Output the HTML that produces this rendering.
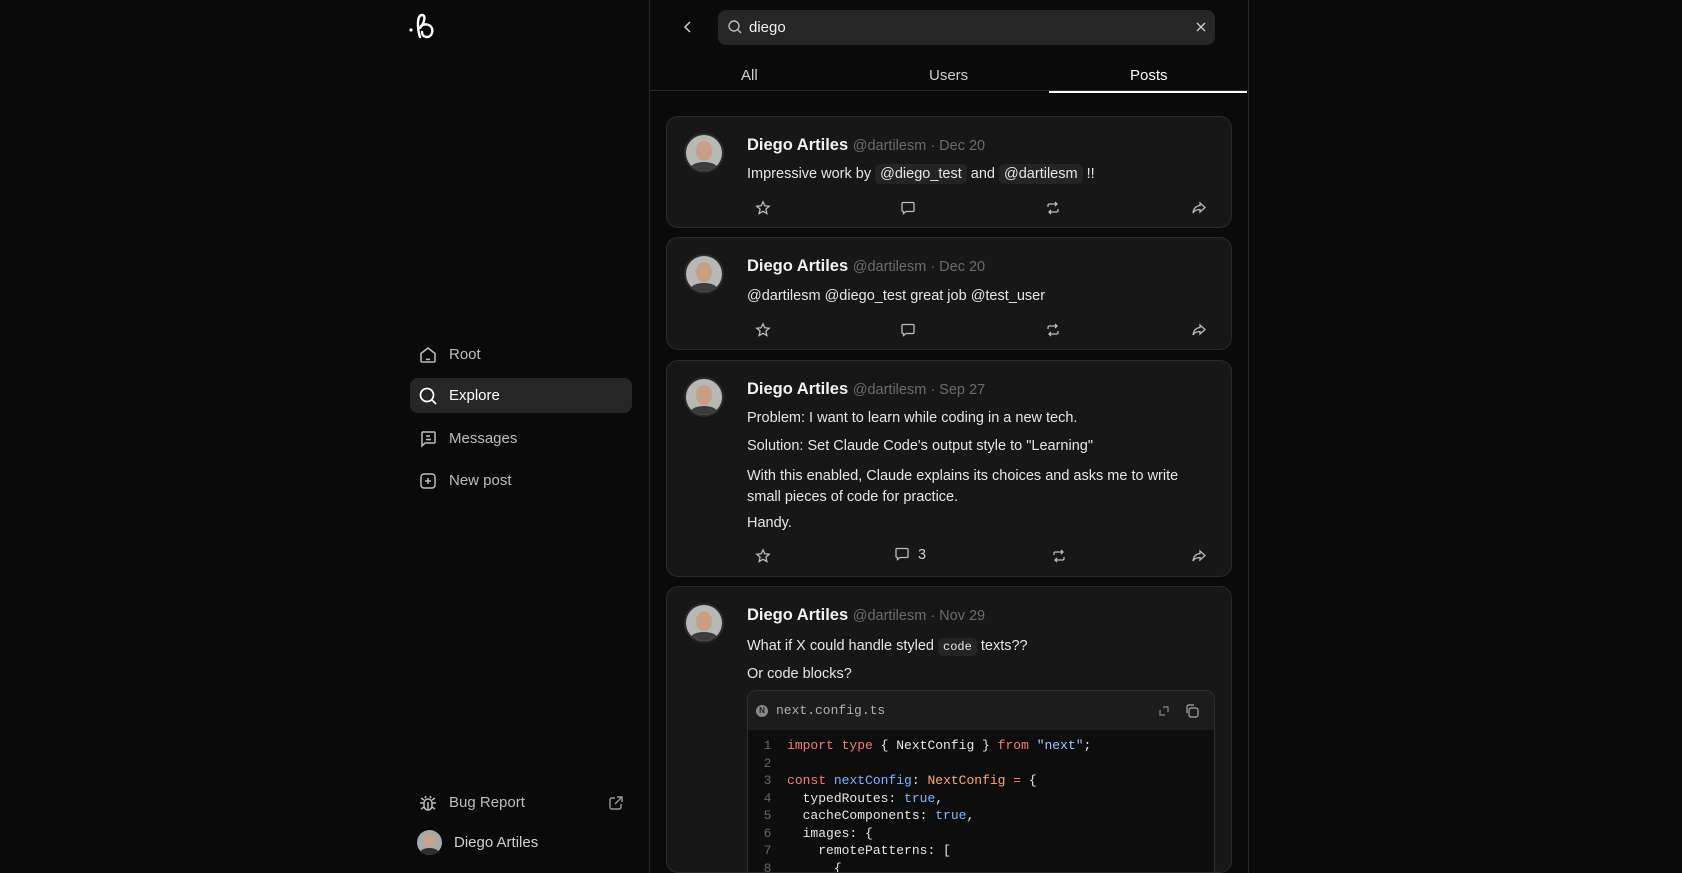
<!DOCTYPE html>
<html style="width:1682px;height:873px;overflow:hidden"><head><meta charset="utf-8"><style>
*{box-sizing:border-box;margin:0;padding:0}
body{width:1682px;height:873px;overflow:hidden;background:#0a0a0a;font-family:"Liberation Sans",sans-serif;color:#ededed;position:relative}
.abs{position:absolute}
.main{position:absolute;left:649px;top:0;width:600px;height:873px;border-left:1px solid #262626;border-right:1px solid #262626}
.nav{position:absolute;left:410px;width:222px;height:35px;border-radius:8px;display:flex;align-items:center;font-size:15px;color:#bdbdbd}
.nav svg{position:absolute;left:8px}
.nav span{position:absolute;left:39px}
.card{position:absolute;left:666px;width:566px;background:#171717;border:1px solid #2a2a2a;border-radius:12px;overflow:hidden}
.av{position:absolute;left:17px;top:16px;width:40px;height:40px;border-radius:50%;background:#b8b8b6;border:2px solid #2b2b2b;overflow:hidden}
.name{position:absolute;left:80px;font-size:16.5px;font-weight:bold;color:#f2f2f2;white-space:nowrap}
.name small{font-size:14.5px;font-weight:normal;color:#6b6b6b}
.txt{position:absolute;left:80px;font-size:14.5px;color:#e6e6e6;white-space:nowrap}
.m{background:#242424;border-radius:5px;padding:2px 5px}
.ic{position:absolute}
.code{font-family:"Liberation Mono",monospace;font-size:13px}
</style></head><body>
<svg class="abs" style="left:408px;top:10px" width="36" height="34" viewBox="0 0 36 34"><circle cx="3" cy="20" r="1.6" fill="#fff"/><path d="M12 27 C9 18 9 5 14 5 C18 5 17 12 12 18 M13 16 C19 12 26 16 24 23 C22 29 14 28 14 22" fill="none" stroke="#fff" stroke-width="2.4" stroke-linecap="round"/></svg>
<div class="nav" style="top:337px"><svg width="20" height="20" viewBox="0 0 20 20" fill="none" stroke="#bdbdbd" stroke-width="1.5"><path d="M3 8.5 L10 3 L17 8.5 V16 Q17 17 16 17 H4 Q3 17 3 16Z"/><path d="M8 14 Q10 15 12 14"/></svg><span>Root</span></div>
<div class="nav" style="top:378px;background:#262626;color:#fff"><svg width="20" height="20" viewBox="0 0 20 20" fill="none" stroke="#fff" stroke-width="1.7"><circle cx="9" cy="9" r="6.5"/><path d="M14 14 L18 18"/></svg><span>Explore</span></div>
<div class="nav" style="top:421px"><svg width="20" height="20" viewBox="0 0 20 20" fill="none" stroke="#bdbdbd" stroke-width="1.5"><path d="M4 3 H16 Q17 3 17 4 V13 Q17 14 16 14 H7 L4 17 V4 Q4 3 5 3"/><path d="M8 7 H12 M8 10.5 H13"/></svg><span>Messages</span></div>
<div class="nav" style="top:463px"><svg width="20" height="20" viewBox="0 0 20 20" fill="none" stroke="#bdbdbd" stroke-width="1.5"><rect x="3" y="3" width="14" height="14" rx="3"/><path d="M10 7 V13 M7 10 H13"/></svg><span>New post</span></div>
<div class="nav" style="top:785px"><svg width="20" height="20" viewBox="0 0 20 20" fill="none" stroke="#bdbdbd" stroke-width="1.5"><rect x="6" y="6" width="8" height="11" rx="4"/><path d="M7 5 L8 3 M13 5 L12 3 M6 10 H2 M14 10 H18 M6 14 L3 16 M14 14 L17 16 M6 7 L3 5 M14 7 L17 5 M10 9 V17"/></svg><span>Bug Report</span><svg style="left:198px" width="16" height="16" viewBox="0 0 16 16" fill="none" stroke="#9a9a9a" stroke-width="1.4"><path d="M7 3 H4 Q2 3 2 5 V12 Q2 14 4 14 H11 Q13 14 13 12 V9 M9 2 H14 V7 M14 2 L7 9"/></svg></div>
<div class="abs" style="left:417px;top:830px;width:25px;height:25px;border-radius:50%;background:#a9a9a7;overflow:hidden"><div style="position:absolute;left:7px;top:4px;width:11px;height:13px;border-radius:50%;background:#c9a48c"></div><div style="position:absolute;left:3px;top:18px;width:19px;height:10px;border-radius:50%;background:#2d2d2d"></div></div>
<div class="abs" style="left:454px;top:834px;font-size:15px;color:#d0d0d0">Diego Artiles</div>

<div class="main"></div>
<svg class="abs" style="left:682px;top:20px" width="12" height="14" viewBox="0 0 12 14" fill="none" stroke="#cfcfcf" stroke-width="1.5"><path d="M8 2 L3 7 L8 12"/></svg>
<div class="abs" style="left:718px;top:10px;width:497px;height:35px;background:#262626;border-radius:8px"></div>
<svg class="abs" style="left:727px;top:19px" width="16" height="16" viewBox="0 0 16 16" fill="none" stroke="#bbb" stroke-width="1.4"><circle cx="7" cy="7" r="5"/><path d="M11 11 L14 14"/></svg>
<div class="abs" style="left:749px;top:19px;font-size:15px;color:#f0f0f0">diego</div>
<svg class="abs" style="left:1195px;top:21px" width="12" height="12" viewBox="0 0 12 12" stroke="#ccc" stroke-width="1.4"><path d="M2 2 L10 10 M10 2 L2 10"/></svg>
<div class="abs" style="left:741px;top:67px;font-size:15px;color:#cfcfcf">All</div>
<div class="abs" style="left:929px;top:67px;font-size:15px;color:#cfcfcf">Users</div>
<div class="abs" style="left:1130px;top:67px;font-size:15px;color:#fff">Posts</div>
<div class="abs" style="left:650px;top:90px;width:598px;height:1px;background:#262626"></div>
<div class="abs" style="left:1049px;top:91px;width:198px;height:2px;background:#fff"></div>

<div class="card" style="top:116px;height:112px">
<div class="av"><div style="position:absolute;left:10px;top:6px;width:16px;height:20px;border-radius:50%;background:#c79f86"></div><div style="position:absolute;left:4px;top:27px;width:28px;height:14px;border-radius:50%;background:#3c3c3c"></div></div>
<div class="name" style="top:19px">Diego Artiles <small>@dartilesm · Dec 20</small></div>
<div class="txt" style="top:49px">Impressive work by <span class="m">@diego_test</span> and <span class="m">@dartilesm</span> !!</div>
</div>
<div class="card" style="top:237px;height:113px">
<div class="av"><div style="position:absolute;left:10px;top:6px;width:16px;height:20px;border-radius:50%;background:#c79f86"></div><div style="position:absolute;left:4px;top:27px;width:28px;height:14px;border-radius:50%;background:#3c3c3c"></div></div>
<div class="name" style="top:19px">Diego Artiles <small>@dartilesm · Dec 20</small></div>
<div class="txt" style="top:50px">@dartilesm @diego_test great job @test_user</div>
</div>
<div class="card" style="top:360px;height:217px">
<div class="av"><div style="position:absolute;left:10px;top:6px;width:16px;height:20px;border-radius:50%;background:#c79f86"></div><div style="position:absolute;left:4px;top:27px;width:28px;height:14px;border-radius:50%;background:#3c3c3c"></div></div>
<div class="name" style="top:19px">Diego Artiles <small>@dartilesm · Sep 27</small></div>
<div class="txt" style="top:49px">Problem: I want to learn while coding in a new tech.</div>
<div class="txt" style="top:77px">Solution: Set Claude Code's output style to "Learning"</div>
<div class="txt" style="top:105px;line-height:20.5px">With this enabled, Claude explains its choices and asks me to write<br>small pieces of code for practice.</div>
<div class="txt" style="top:154px">Handy.</div>
<div class="txt" style="left:251px;top:186px;color:#cfcfcf">3</div>
</div>
<div class="card" style="top:586px;height:287px">
<div class="av"><div style="position:absolute;left:10px;top:6px;width:16px;height:20px;border-radius:50%;background:#c79f86"></div><div style="position:absolute;left:4px;top:27px;width:28px;height:14px;border-radius:50%;background:#3c3c3c"></div></div>
<div class="name" style="top:19px">Diego Artiles <small>@dartilesm · Nov 29</small></div>
<div class="txt" style="top:51px">What if X could handle styled <span class="m code" style="font-size:12px">code</span> texts??</div>
<div class="txt" style="top:79px">Or code blocks?</div>
<div style="position:absolute;left:80px;top:103px;width:468px;height:300px;border:1px solid #2e2e2e;border-radius:10px;background:#0d0d0d;overflow:hidden">
 <div style="height:39px;background:#1c1c1c;position:relative">
  <div style="position:absolute;left:8px;top:14px;width:12px;height:12px;border-radius:50%;background:#888;font-size:8px;color:#222;text-align:center;line-height:12px;font-weight:bold">N</div>
  <div class="code" style="position:absolute;left:28px;top:12px;color:#b0b0b0">next.config.ts</div>
  <svg style="position:absolute;left:409px;top:13px" width="14" height="14" viewBox="0 0 14 14" fill="none" stroke="#888" stroke-width="1.2"><path d="M3 6 V11 H8 M11 8 V3 H6"/></svg>
  <svg style="position:absolute;left:436px;top:12px" width="16" height="16" viewBox="0 0 16 16" fill="none" stroke="#aaa" stroke-width="1.2"><rect x="5" y="5" width="9" height="9" rx="2"/><path d="M3 10 V4 Q3 2 5 2 H10"/></svg>
 </div>
 <pre class="code" style="position:absolute;left:0;top:46px;line-height:17.5px;color:#e6e6e6"><span style="color:#666">  1  </span><span style="color:#f47c7c">import type</span> { NextConfig } <span style="color:#f47c7c">from</span> <span style="color:#9ecbff">"next"</span>;
<span style="color:#666">  2  </span>
<span style="color:#666">  3  </span><span style="color:#f47c7c">const</span> <span style="color:#79b8ff">nextConfig</span>: <span style="color:#ffab70">NextConfig</span> <span style="color:#f47c7c">=</span> {
<span style="color:#666">  4  </span>  typedRoutes: <span style="color:#79b8ff">true</span>,
<span style="color:#666">  5  </span>  cacheComponents: <span style="color:#79b8ff">true</span>,
<span style="color:#666">  6  </span>  images: {
<span style="color:#666">  7  </span>    remotePatterns: [
<span style="color:#666">  8  </span>      {</pre>
</div>
</div>

<svg width="0" height="0" style="position:absolute"><defs>
<g id="star" fill="none" stroke="#bbb" stroke-width="1.3"><path d="M8 1.8 L9.8 5.8 L14.2 6.2 L10.9 9.1 L11.9 13.6 L8 11.3 L4.1 13.6 L5.1 9.1 L1.8 6.2 L6.2 5.8Z"/></g>
<g id="cm" fill="none" stroke="#bbb" stroke-width="1.3"><path d="M3 2.5 H13 Q14 2.5 14 3.5 V10.5 Q14 11.5 13 11.5 H6 L3.5 13.5 V11.5 Q2 11.5 2 10.5 V3.5 Q2 2.5 3 2.5Z"/></g>
<g id="rt" fill="none" stroke="#bbb" stroke-width="1.3"><path d="M3 7 V5.5 Q3 4 4.5 4 H12 M10 2 L12 4 L10 6 M13 9 V10.5 Q13 12 11.5 12 H4 M6 10 L4 12 L6 14"/></g>
<g id="sh" fill="none" stroke="#bbb" stroke-width="1.3"><path d="M9 3 L14 7.5 L9 12 V9.5 Q4 9.5 2 13 Q3 6 9 5.5Z"/></g>
</defs></svg>
<svg class="ic" style="left:755px;top:200px" width="16" height="16"><use href="#star"/></svg>
<svg class="ic" style="left:900px;top:200px" width="16" height="16"><use href="#cm"/></svg>
<svg class="ic" style="left:1045px;top:200px" width="16" height="16"><use href="#rt"/></svg>
<svg class="ic" style="left:1191px;top:200px" width="16" height="16"><use href="#sh"/></svg>
<svg class="ic" style="left:755px;top:322px" width="16" height="16"><use href="#star"/></svg>
<svg class="ic" style="left:900px;top:322px" width="16" height="16"><use href="#cm"/></svg>
<svg class="ic" style="left:1045px;top:322px" width="16" height="16"><use href="#rt"/></svg>
<svg class="ic" style="left:1191px;top:322px" width="16" height="16"><use href="#sh"/></svg>
<svg class="ic" style="left:755px;top:548px" width="16" height="16"><use href="#star"/></svg>
<svg class="ic" style="left:894px;top:546px" width="16" height="16"><use href="#cm"/></svg>
<svg class="ic" style="left:1051px;top:548px" width="16" height="16"><use href="#rt"/></svg>
<svg class="ic" style="left:1191px;top:548px" width="16" height="16"><use href="#sh"/></svg>
</body></html>
